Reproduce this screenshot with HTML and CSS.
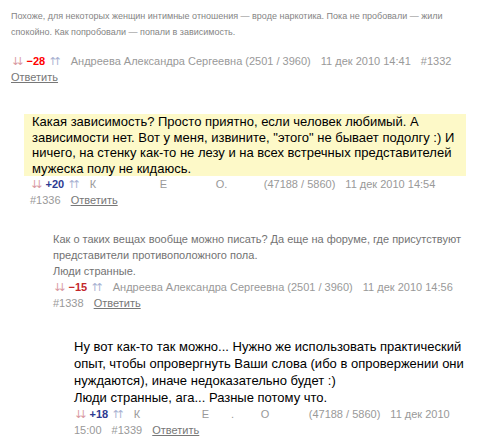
FILE: index.html
```html
<!DOCTYPE html>
<html lang="ru">
<head>
<meta charset="utf-8">
<link rel="stylesheet" href="styles.css">
</head>
<body>
<div class="thread">
  <div class="comment c1">
    <div class="text t9 grey">Похоже, для некоторых женщин интимные отношения — вроде наркотика. Пока не пробовали — жили спокойно. Как попробовали — попали в зависимость.</div>
    <div class="meta"><span class="f"><span class="ar dn">↓↓</span> <b class="neg">−28</b> <span class="ar up">↑↑</span></span> <span class="f">Андреева Александра Сергеевна (2501 / 3960)</span> <span class="f">11 дек 2010 14:41</span> <span class="f">#1332</span><br><a class="reply" href="#">Ответить</a></div>

    <div class="comment c2">
      <div class="text t13 hl">Какая зависимость? Просто приятно, если человек любимый. А зависимости нет. Вот у меня, извините, "этого" не бывает подолгу :) И ничего, на стенку как-то не лезу и на всех встречных представителей мужеска полу не кидаюсь.</div>
      <div class="meta"><span class="f"><span class="ar dn">↓↓</span> <b class="pos">+20</b> <span class="ar up">↑↑</span></span> <span class="f"><span class="nm n1">К</span><span class="nm n2">Е</span><span class="nm n3">О.</span>(47188 / 5860)</span> <span class="f">11 дек 2010 14:54</span> <span class="f">#1336</span> <a class="reply" href="#">Ответить</a></div>

      <div class="comment c3">
        <div class="text t11 grey2">Как о таких вещах вообще можно писать? Да еще на форуме, где присутствуют представители противоположного пола.<br>Люди странные.</div>
        <div class="meta"><span class="f"><span class="ar dn">↓↓</span> <b class="neg2">−15</b> <span class="ar up">↑↑</span></span> <span class="f">Андреева Александра Сергеевна (2501 / 3960)</span> <span class="f">11 дек 2010 14:56</span> <span class="f">#1338</span> <a class="reply" href="#">Ответить</a></div>

        <div class="comment c4">
          <div class="text t13 lh17">Ну вот как-то так можно... Нужно же использовать практический опыт, чтобы опровергнуть Ваши слова (ибо в опровержении они нуждаются), иначе недоказательно будет :)<br>Люди странные, ага... Разные потому что.</div>
          <div class="meta"><span class="f"><span class="ar dn">↓↓</span> <b class="pos">+18</b> <span class="ar up">↑↑</span></span> <span class="f"><span class="nm m1">К</span><span class="nm m2">Е<span class="dot">.</span></span><span class="nm m3">О</span>(47188 / 5860)</span> <span class="f">11 дек 2010 15:00</span> <span class="f">#1339</span> <a class="reply" href="#">Ответить</a></div>
        </div>
      </div>
    </div>
  </div>
</div>
</body>
</html>
```
FILE: styles.css
```css
html, body {
  margin: 0;
  padding: 0;
  background: #fff;
}
body {
  font-family: "Liberation Sans", Arial, sans-serif;
  color: #000;
}
.thread {
  width: 459px;
  padding: 8px 0 0 11px;
}
.c2 { margin: 29px 0 0 19px; }
.c3 { margin: 23px 0 0 23px; }
.c4 { margin: 27px 0 0 21px; }

.t9 { font-size: 9px; line-height: 16px; }
.t11 { font-size: 11px; line-height: 16px; }
.t13 { font-size: 13px; line-height: 15.5px; }
.t13.lh17 { line-height: 17px; }

.grey { color: #858585; }
.grey2 { color: #737373; }
.hl {
  background: #fdf9c8;
  margin: 0 4px 0 -6px;
  padding: 0 4px 0 8px;
}
.c1 > .text { margin-bottom: 13px; }

.meta {
  font-size: 11px;
  line-height: 16px;
  color: #999;
}
.f { margin-right: 7px; }
.ar {
  font-family: "DejaVu Sans", sans-serif;
  font-size: 11px;
  line-height: 1;
  letter-spacing: -4.5px;
  padding-right: 3px;
}
.dn { color: #d99aa3; }
.up { color: #a9b2d2; }
.neg { color: #f00; }
.neg2 { color: #c3262a; }
.pos { color: #2d3a91; }
.nm { display: inline-block; }
.n1 { width: 70px; }
.n2 { width: 56px; }
.n3 { width: 48px; }
.m1 { width: 68px; }
.m2 { width: 59px; }
.m3 { width: 48px; }
.dot { margin-left: 22px; }
.reply {
  color: #777;
  text-decoration: underline;
}
```
